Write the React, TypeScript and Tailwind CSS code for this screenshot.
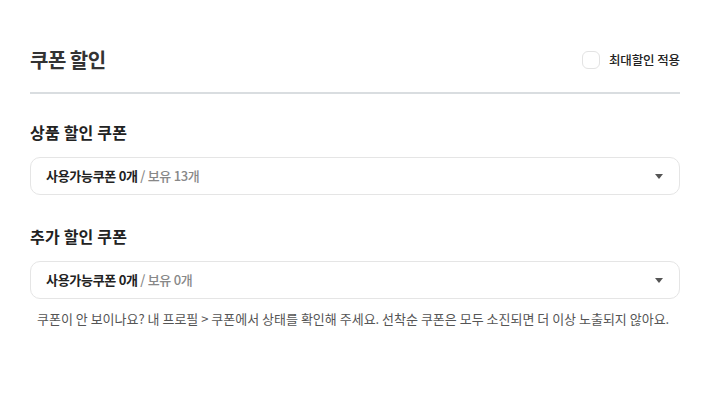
import React from "react";

function Select({ avail, owned }: { avail: string; owned: string }) {
  return (
    <div className="flex h-[38px] items-center justify-between rounded-[10px] border border-[#e5e5e5] bg-white pl-[15px] pr-[16px]">
      <div className="text-[13px] leading-[18px] tracking-[-0.3px]">
        <span className="font-semibold text-[#222]">사용가능쿠폰 {avail}</span>
        <span className="font-medium text-[#888]"> / 보유 {owned}</span>
      </div>
      <svg width="8" height="5" viewBox="0 0 8 5" className="mt-[1px]">
        <path d="M0 0 H8 L4 5 Z" fill="#555" />
      </svg>
    </div>
  );
}

export default function App() {
  return (
    <div
      className="min-h-[417px] w-[702px] bg-white pl-[30px] pr-[22px] pt-[46px] text-[#222]"
      style={{ fontFamily: '"Noto Sans CJK KR", "Noto Sans", sans-serif' }}
    >
      <div className="flex h-[28px] items-center justify-between">
        <h1 className="text-[20px] font-bold leading-[28px] tracking-[-0.5px] text-[#333]">쿠폰 할인</h1>
        <label className="flex items-center gap-[9px]">
          <span className="h-[18px] w-[18px] rounded-[6px] border border-[#e3e3e3] bg-white" />
          <span className="text-[12.5px] font-medium leading-[18px] tracking-[-0.1px] text-[#222]">최대할인 적용</span>
        </label>
      </div>
      <div className="mt-[18px] h-[2px] bg-[#d9dde0]" />
      <h2 className="mt-[27px] text-[16px] font-bold leading-[22px] tracking-[0.2px] text-[#222]">상품 할인 쿠폰</h2>
      <div className="mt-[14px]">
        <Select avail="0개" owned="13개" />
      </div>
      <h2 className="mt-[30px] text-[16px] font-bold leading-[22px] tracking-[0.2px] text-[#222]">추가 할인 쿠폰</h2>
      <div className="mt-[14px]">
        <Select avail="0개" owned="0개" />
      </div>
      <p className="mt-[10px] pl-[7px] text-[13px] leading-[20px] tracking-[0px] text-[#555]">
        쿠폰이 안 보이나요? 내 프로필 &gt; 쿠폰에서 상태를 확인해 주세요. 선착순 쿠폰은 모두 소진되면 더 이상 노출되지 않아요.
      </p>
    </div>
  );
}
